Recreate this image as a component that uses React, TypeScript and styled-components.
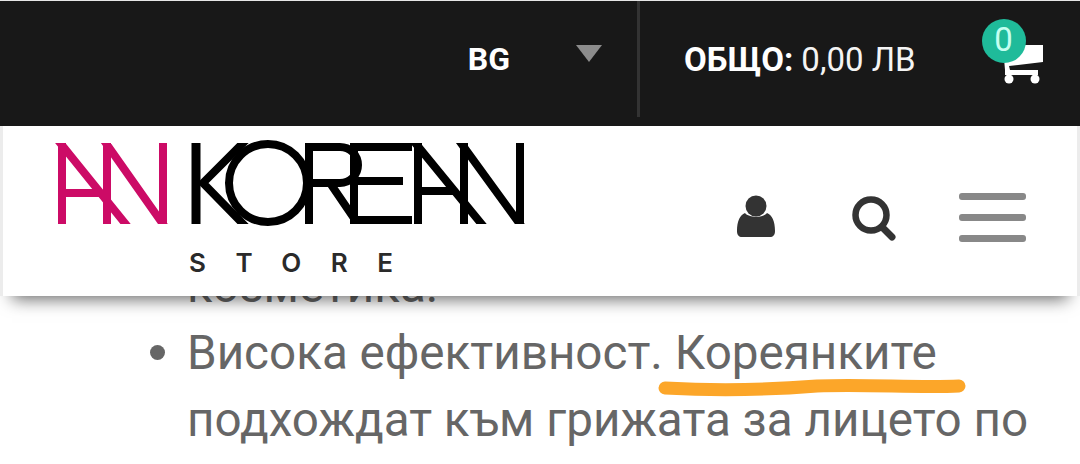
import React from 'react';
import styled, { createGlobalStyle } from 'styled-components';

const GlobalStyle = createGlobalStyle`
  html, body {
    margin: 0;
    padding: 0;
    width: 1080px;
    height: 464px;
    overflow: hidden;
    background: #fff;
    font-family: Roboto, "Liberation Sans", sans-serif;
  }
`;

const TopBar = styled.div`
  position: relative;
  z-index: 2;
  display: flex;
  justify-content: flex-end;
  height: 125px;
  background: #181818;
  border-top: 1px solid #e6e6e6;
  color: #fff;
`;

const LangBlock = styled.div`
  display: flex;
  align-items: center;
  height: 116px;
  padding-right: 35px;
  border-right: 3px solid #333;
`;

const LangLabel = styled.span`
  font-size: 32px;
  font-weight: 700;
  margin-right: 66px;
`;

const Caret = styled.span`
  width: 0;
  height: 0;
  margin-top: -12px;
  border-left: 13px solid transparent;
  border-right: 13px solid transparent;
  border-top: 17px solid #8c8c8c;
`;

const CartBlock = styled.div`
  display: flex;
  align-items: center;
  height: 116px;
  padding-left: 44px;
  width: 440px;
  box-sizing: border-box;
`;

const Total = styled.span`
  font-size: 33px;
  font-weight: 400;
  color: #f4f4f4;
  white-space: nowrap;
  b {
    font-weight: 700;
    color: #fff;
  }
`;

const CartIcon = styled.div`
  position: relative;
  margin-left: 86px;
  margin-top: 14px;
  width: 42px;
  height: 42px;
`;

const Badge = styled.span`
  position: absolute;
  left: -20px;
  top: -26px;
  width: 44px;
  height: 44px;
  border-radius: 50%;
  background: #1fbb9a;
  color: #c4fff1;
  font-size: 33px;
  line-height: 42px;
  text-align: center;
`;

const HeaderWrap = styled.div`
  position: relative;
  z-index: 1;
  padding: 0 3px;
  background: #ececec;
  box-shadow: 0 15px 16px -12px rgba(0, 0, 0, 0.6);
`;

const Header = styled.header`
  display: flex;
  align-items: flex-start;
  justify-content: space-between;
  height: 170px;
  background: #fff;
`;

const Logo = styled.div`
  display: flex;
  flex-direction: column;
  padding: 13px 0 0 51px;
`;

const LogoStore = styled.span`
  margin: 18px 0 0 135px;
  font-family: Inter, "Liberation Sans", sans-serif;
  font-size: 26px;
  line-height: 28px;
  font-weight: 600;
  letter-spacing: 29.5px;
  color: #2a2a2a;
`;

const Actions = styled.div`
  display: flex;
  align-items: flex-start;
  padding: 67px 51px 0 0;
`;

const IconSlot = styled.span<{ $gap: number; $top?: number }>`
  display: block;
  margin-right: ${(p) => p.$gap}px;
  margin-top: ${(p) => p.$top ?? 0}px;
  line-height: 0;
`;

const Burger = styled.div`
  display: flex;
  flex-direction: column;
  gap: 14px;
  width: 67px;
`;

const BurgerBar = styled.span`
  display: block;
  height: 7px;
  border-radius: 3px;
  background: #888;
`;

const Article = styled.main`
  margin-top: -43px;
  padding-left: 187px;
  padding-right: 40px;
  font-size: 47.6px;
  line-height: 67px;
  color: #666;
`;

const Tail = styled.div`
  white-space: nowrap;
`;

const List = styled.ul`
  margin: 0;
  padding: 0;
  list-style: none;
`;

const Item = styled.li`
  position: relative;
  &::before {
    content: '';
    position: absolute;
    left: -37px;
    top: 25px;
    width: 15px;
    height: 15px;
    border-radius: 50%;
    background: #666;
  }
`;

const Marked = styled.span`
  position: relative;
`;

const Scribble = styled.svg`
  position: absolute;
  left: -18px;
  top: 53px;
  width: 310px;
  height: 20px;
`;

const LogoMark = () => (
  <svg width="480" height="92" viewBox="54 138 480 92" fill="none" role="img" aria-label="AN Korean">
    <defs>
      <clipPath id="logo-band">
        <rect x="54" y="142" width="480" height="81" />
      </clipPath>
    </defs>
    <g stroke="#cc0b66" strokeWidth="8" clipPath="url(#logo-band)">
      <path d="M62 142V223M57 138L128 226M62 192H100" />
      <path d="M107 142V223M103 138L165 226M163 142V223" />
    </g>
    <g stroke="#000" strokeWidth="8">
      <g clipPath="url(#logo-band)">
        <path d="M196 142V223" strokeWidth="9" />
        <path d="M246 139L203 182L246 226" />
        <path d="M309 142V223M309 146H340A18 18 0 0 1 340 182H309M330 182L360 226" />
        <path d="M354 142V223M354 146H412M354 180H403M354 219H412" />
        <path d="M418 142V223M412 138L484 226M418 190H456" />
        <path d="M464 142V223M458 138L522 226M520 142V223" />
      </g>
      <circle cx="268" cy="182" r="39" />
    </g>
  </svg>
);

export default function App() {
  return (
    <>
      <GlobalStyle />
      <TopBar>
        <LangBlock>
          <LangLabel>BG</LangLabel>
          <Caret />
        </LangBlock>
        <CartBlock>
          <Total>
            <b>ОБЩО:</b> 0,00 ЛВ
          </Total>
          <CartIcon>
            <svg width="42" height="42" viewBox="0 0 42 42" fill="#fff">
              <path d="M6 0H41V17L7 21L8 25H36V30H3V25L1 2Z" />
              <circle cx="7" cy="34" r="4.5" />
              <circle cx="33" cy="34" r="4.5" />
            </svg>
            <Badge>0</Badge>
          </CartIcon>
        </CartBlock>
      </TopBar>
      <HeaderWrap>
        <Header>
          <Logo>
            <LogoMark />
            <LogoStore>STORE</LogoStore>
          </Logo>
          <Actions>
            <IconSlot $gap={76} $top={2}>
              <svg width="40" height="43" viewBox="0 0 40 43" fill="#333">
                <circle cx="20" cy="11" r="10.5" />
                <path d="M9 18C13 23 27 23 31 18C36 20 39 26 39 36C39 40 37 42 34 42H6C3 42 1 40 1 36C1 26 4 20 9 18Z" />
              </svg>
            </IconSlot>
            <IconSlot $gap={63} $top={3}>
              <svg width="44" height="46" viewBox="0 0 44 46" fill="none" stroke="#333">
                <circle cx="19" cy="19" r="15.5" strokeWidth="6.5" />
                <path d="M30 31L40 41" strokeWidth="7" strokeLinecap="round" />
              </svg>
            </IconSlot>
            <Burger>
              <BurgerBar />
              <BurgerBar />
              <BurgerBar />
            </Burger>
          </Actions>
        </Header>
      </HeaderWrap>
      <Article>
        <Tail>козметика.</Tail>
        <List>
          <Item>
            Висока ефективност.{' '}
            <Marked>
              Кореянките
              <Scribble viewBox="0 0 310 20" fill="none">
                <path
                  d="M8 10C60 13 110 12 160 8C210 6 260 10 302 8"
                  stroke="#fca629"
                  strokeWidth="13"
                  strokeLinecap="round"
                />
              </Scribble>
            </Marked>{' '}
            подхождат към грижата за лицето по
          </Item>
        </List>
      </Article>
    </>
  );
}
